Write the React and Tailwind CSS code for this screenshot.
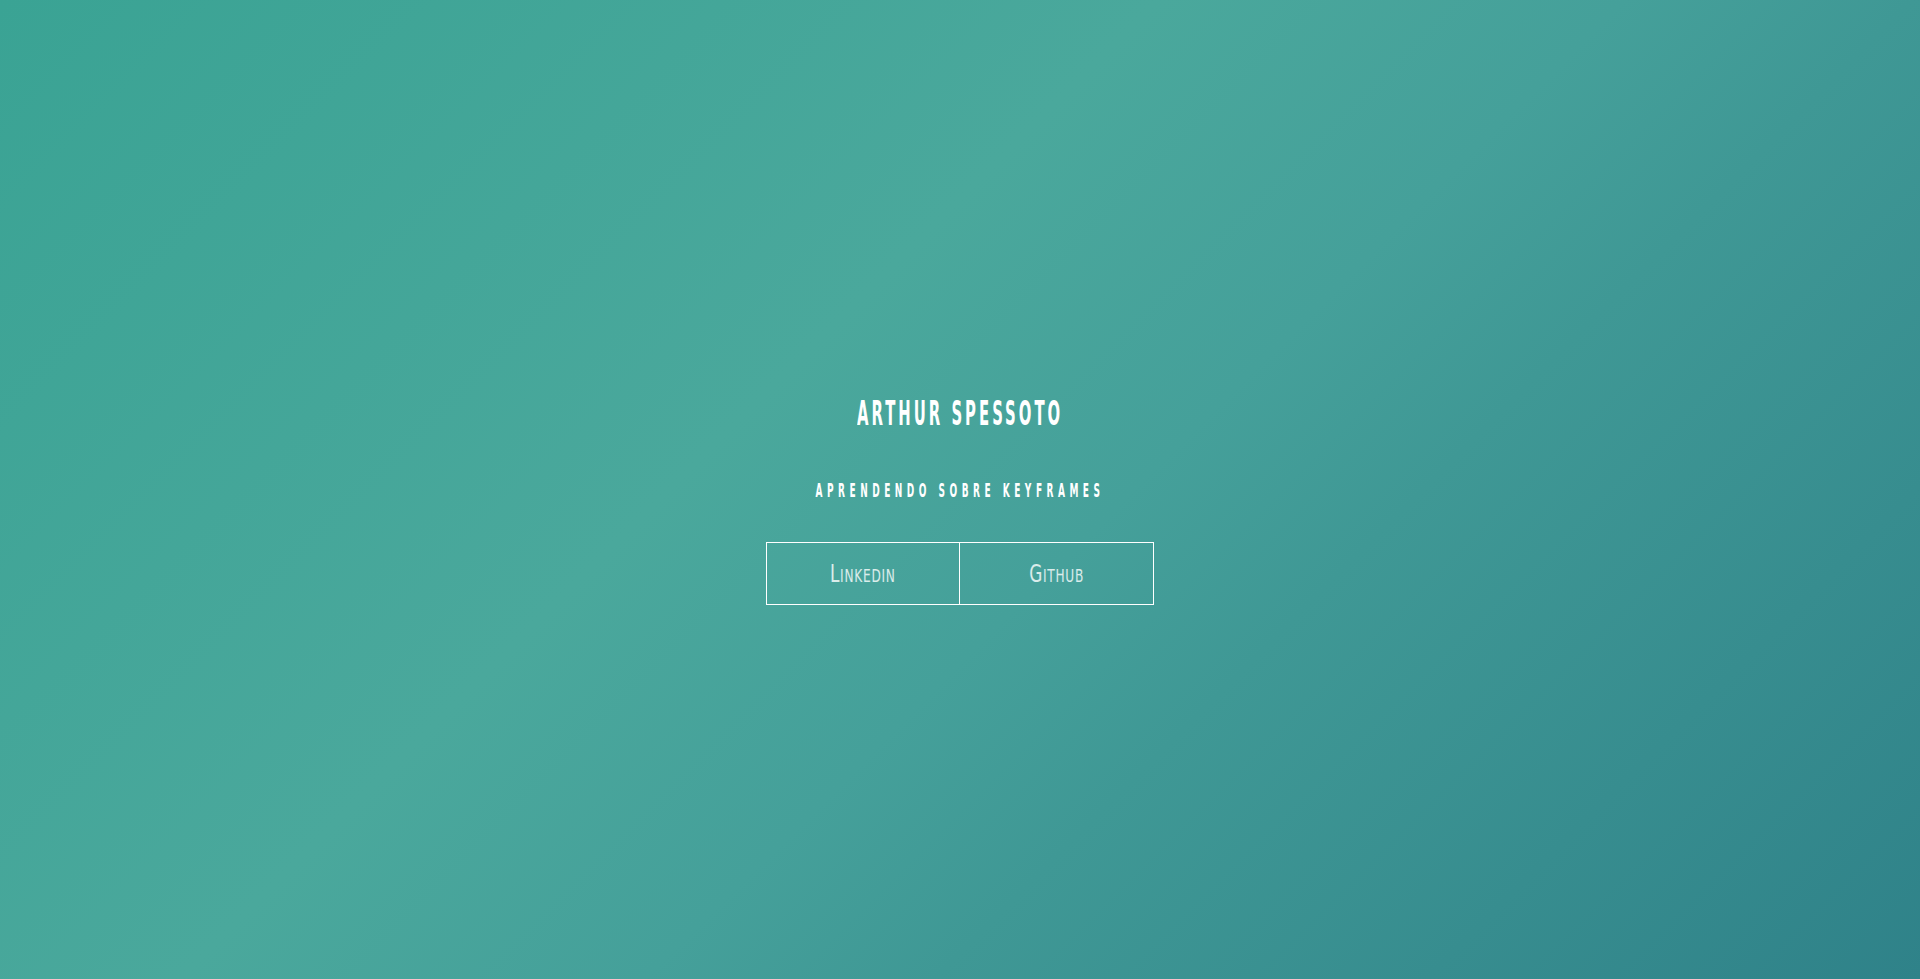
import React from 'react';

const font = { fontFamily: '"DejaVu Sans Condensed", "DejaVu Sans", sans-serif' };

const App = () => {
  return (
    <div
      className="w-full h-[979px] flex flex-col items-center justify-center pt-[22px] bg-[linear-gradient(135deg,#3aa394_0%,#4aa89c_40%,#45a09a_56%,#3f9895_66%,#2f8289_100%)]"
      style={font}
    >
      <h1 className="text-white text-[33px] leading-none tracking-[6px] font-bold scale-x-[0.5] whitespace-nowrap">
        ARTHUR SPESSOTO
      </h1>
      <h2 className="mt-[50px] text-white text-[20px] leading-none tracking-[9px] font-bold scale-x-[0.5] whitespace-nowrap">
        APRENDENDO SOBRE KEYFRAMES
      </h2>
      <div className="mt-[42px] flex">
        <a className="w-[194px] h-[63px] border border-white border-r-[1.5px] flex items-center justify-center">
          <span className="text-white/80 text-[25px] leading-none scale-x-[0.75] tracking-[1px] [font-variant:small-caps]">Linkedin</span>
        </a>
        <a className="w-[194px] h-[63px] border border-white border-l-0 flex items-center justify-center">
          <span className="text-white/80 text-[25px] leading-none scale-x-[0.75] tracking-[1px] [font-variant:small-caps]">Github</span>
        </a>
      </div>
    </div>
  );
};

export default App;
